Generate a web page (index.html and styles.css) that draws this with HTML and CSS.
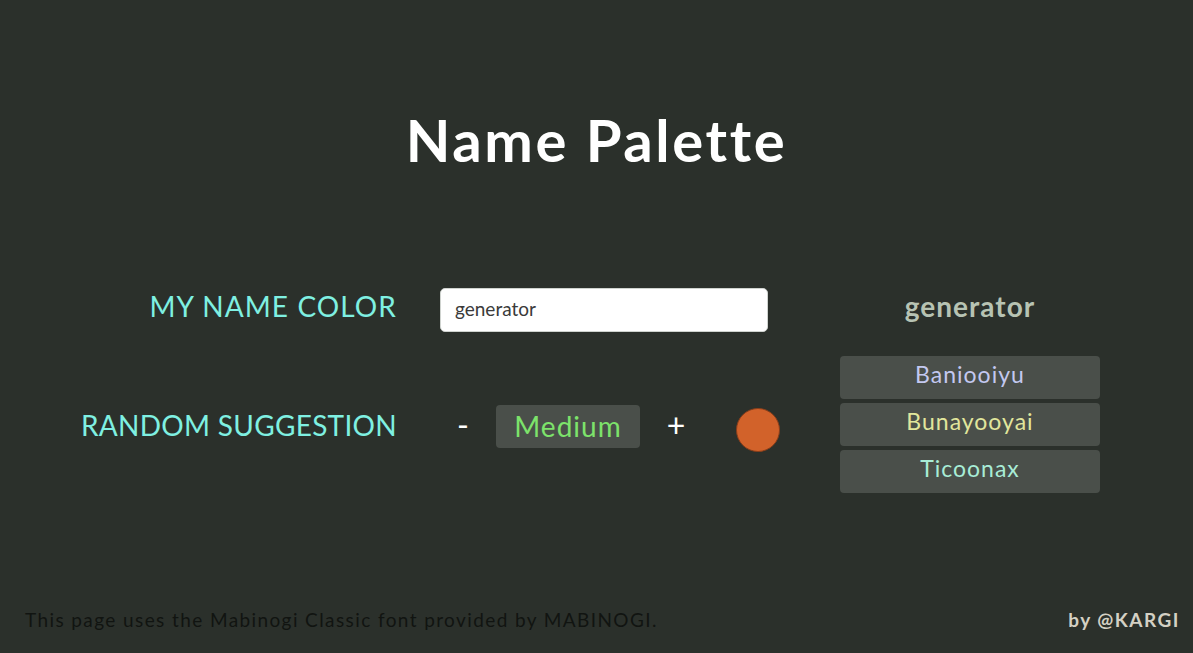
FILE: index.html
```html
<!DOCTYPE html>
<html lang="en">
<head>
    <meta charset="UTF-8">
    <meta name="viewport" content="width=device-width, initial-scale=1.0">
    <title>Name Palette</title>
    <link rel="stylesheet" href="styles.css">
</head>
<body>
    <div class="page">
        <h1 class="title">Name Palette</h1>

        <div class="palette">
            <div class="label label-color">MY NAME COLOR</div>
            <div class="cell">
                <input type="text" class="name-input" value="generator">
            </div>
            <div class="preview">generator</div>

            <div class="label label-random">RANDOM SUGGESTION</div>
            <div class="cell controls">
                <button class="step minus">-</button>
                <div class="level">Medium</div>
                <button class="step plus">+</button>
                <div class="swatch"></div>
            </div>
            <div class="suggestions">
                <button class="suggestion sug-1">Baniooiyu</button>
                <button class="suggestion sug-2">Bunayooyai</button>
                <button class="suggestion sug-3">Ticoonax</button>
            </div>
        </div>

        <div class="footer">
            <span class="credit">This page uses the Mabinogi Classic font provided by MABINOGI.</span>
            <span class="author">by @KARGI</span>
        </div>
    </div>
</body>
</html>
```

FILE: styles.css
```css
body {
    margin: 0;
    background-color: #2b302b;
    font-family: 'Lato', 'Noto Sans', sans-serif;
    color: #ffffff;
}

.page {
    height: 100vh;
    display: flex;
    flex-direction: column;
}

.title {
    margin: 100px 0 0;
    text-align: center;
    font-size: 58px;
    font-weight: 700;
    letter-spacing: 2.6px;
    line-height: 80px;
    color: #ffffff;
}

.palette {
    display: grid;
    grid-template-columns: 397px 328px 289px;
    grid-template-rows: 44px 138px;
    column-gap: 43px;
    row-gap: 23px;
    margin-top: 108px;
    align-items: center;
}

.label {
    text-align: right;
    font-size: 28px;
    color: #7ff0e2;
}

.label-color {
    letter-spacing: 1.1px;
    margin-top: -8px;
}

.label-random {
    letter-spacing: 0.3px;
    margin-top: 2px;
}

.name-input {
    box-sizing: border-box;
    width: 328px;
    height: 44px;
    padding: 0 14px 4px;
    border: 1px solid #cfd3cf;
    border-radius: 5px;
    font-family: inherit;
    font-size: 19px;
    color: #3a3a3a;
    background-color: #ffffff;
    outline: none;
}

.preview {
    padding-left: 29px;
    text-align: center;
    font-size: 28px;
    font-weight: 700;
    letter-spacing: 1px;
    color: #b7c3b3;
    margin-top: -8px;
}

.controls {
    display: flex;
    align-items: center;
}

.step {
    flex-shrink: 0;
    background: none;
    border: none;
    color: #ffffff;
    font-family: inherit;
    font-size: 32px;
    padding: 0;
    text-align: center;
    cursor: pointer;
}

.minus {
    width: 46px;
    margin-right: 10px;
}

.plus {
    width: 72px;
}

.level {
    flex-shrink: 0;
    width: 144px;
    height: 43px;
    margin-top: 4px;
    border-radius: 4px;
    background-color: #4a4f4a;
    color: #7de36b;
    font-size: 28px;
    letter-spacing: 1px;
    display: flex;
    align-items: center;
    justify-content: center;
}

.swatch {
    flex-shrink: 0;
    box-sizing: border-box;
    width: 44px;
    height: 44px;
    border-radius: 50%;
    background-color: #d2622a;
    border: 1px solid #8a3e1a;
    margin-left: 24px;
    margin-top: 12px;
}

.suggestions {
    padding-left: 29px;
    display: flex;
    flex-direction: column;
    gap: 4px;
}

.suggestion {
    width: 260px;
    height: 43px;
    border: none;
    border-radius: 4px;
    background-color: #4a4f4a;
    font-family: inherit;
    font-size: 23px;
    letter-spacing: 1px;
    padding: 0 0 6px;
    cursor: pointer;
}

.sug-1 { color: #c3c8f0; }
.sug-2 { color: #e1e69c; }
.sug-3 { color: #a8ecd6; }

.footer {
    margin-top: auto;
    display: flex;
    justify-content: space-between;
    align-items: baseline;
    padding: 0 13px 22px 25px;
}

.credit {
    font-size: 19px;
    letter-spacing: 1.4px;
    color: #111411;
}

.author {
    font-size: 19px;
    font-weight: 700;
    letter-spacing: 1.5px;
    color: #d4d0c4;
}
```
